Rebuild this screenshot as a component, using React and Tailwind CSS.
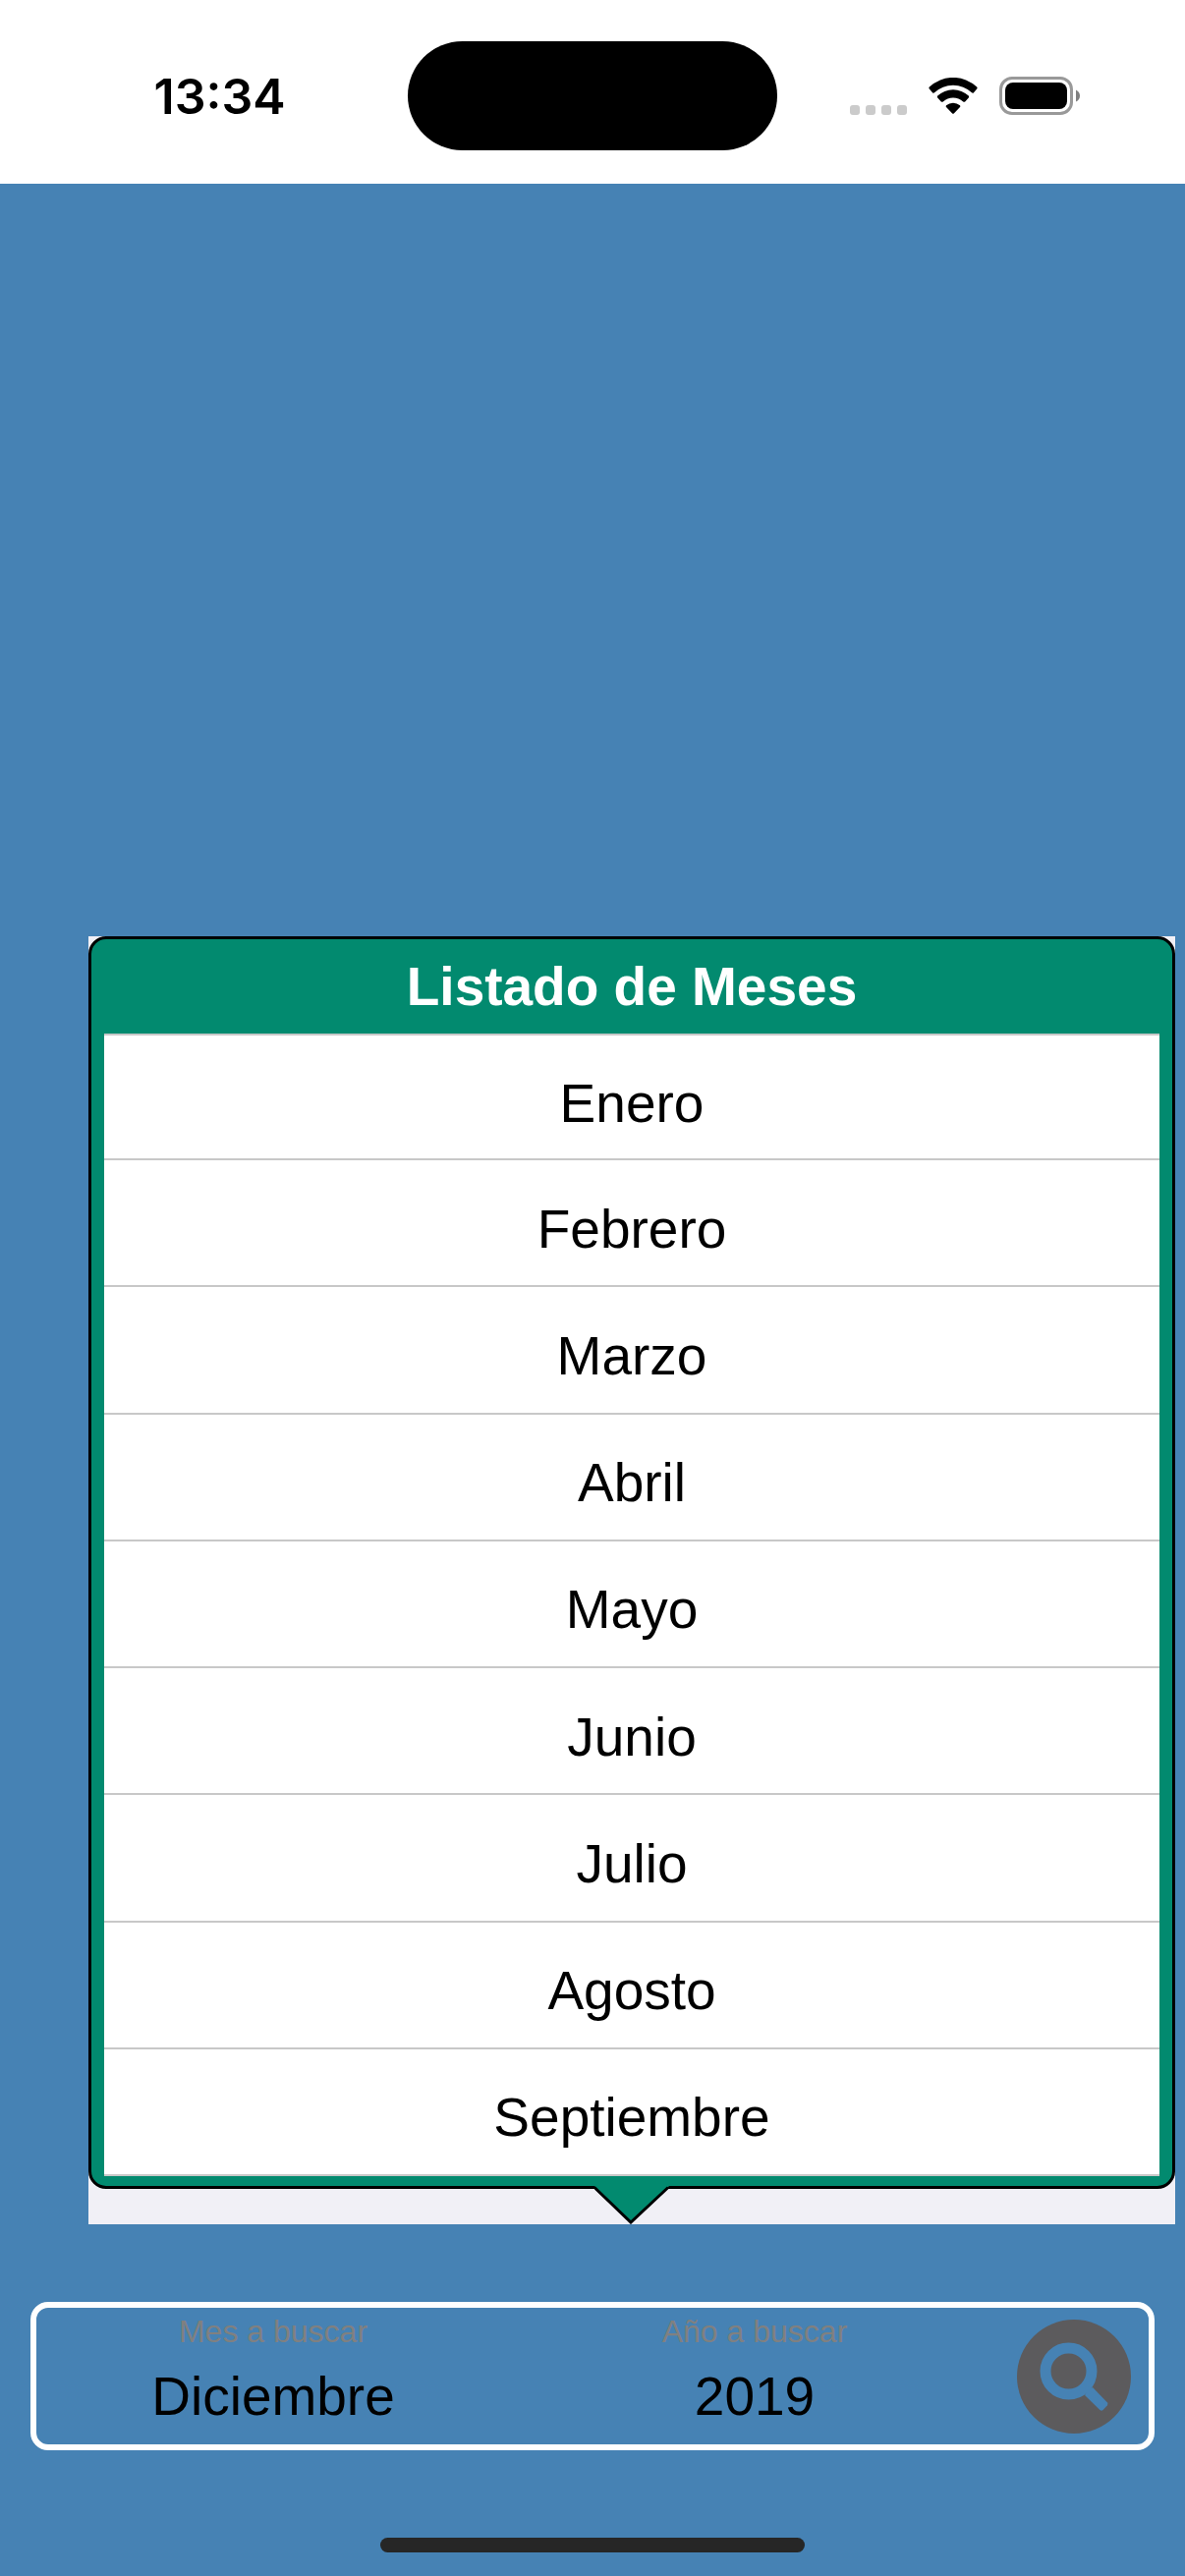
import React, { useState } from "react";

const months = [
  "Enero",
  "Febrero",
  "Marzo",
  "Abril",
  "Mayo",
  "Junio",
  "Julio",
  "Agosto",
  "Septiembre",
];

const StatusBar = () => (
  <header className="bg-white text-black pt-[42px] pb-[34px] flex items-center">
    <div className="flex-1 pl-8 text-center font-['Inter',sans-serif] font-semibold text-[50px] leading-[60px]">
      13:34
    </div>
    <div className="w-[376px] h-[111px] rounded-full bg-black" />
    <div className="flex-1 pr-8 flex items-center justify-center gap-[22px]">
      <svg width="58" height="38" viewBox="0 0 58 38" fill="#cbcbcb" aria-hidden="true">
        <rect x="0" y="28" width="10" height="10" rx="3" />
        <rect x="16" y="28" width="10" height="10" rx="3" />
        <rect x="32" y="28" width="10" height="10" rx="3" />
        <rect x="48" y="28" width="10" height="10" rx="3" />
      </svg>
      <svg width="50" height="38" viewBox="0 0 50 38" fill="#000" aria-hidden="true">
        <path d="M0.8 9.6Q0 10.6 0.8 11.4L4 15.2Q5 16.2 6 15.3A28 28 0 0 1 44 15.3Q45 16.2 46 15.2L49.2 11.4Q50 10.6 49.2 9.6A35 35 0 0 0 0.8 9.6Z" />
        <path d="M9.2 18.6Q8.4 19.6 9.2 20.4L12.8 24.4Q13.8 25.3 14.8 24.4A15.5 15.5 0 0 1 35.2 24.4Q36.2 25.3 37.2 24.4L40.8 20.4Q41.6 19.6 40.8 18.6A23 23 0 0 0 9.2 18.6Z" />
        <path d="M18 28.2Q17.2 29.1 18 30L24.2 36.4Q25 37.3 25.8 36.4L32 30Q32.8 29.1 32 28.2A11 11 0 0 0 18 28.2Z" />
      </svg>
      <svg width="83" height="39" viewBox="0 0 83 39" aria-hidden="true">
        <rect x="1.5" y="1.5" width="72" height="36" rx="11.5" fill="none" stroke="#999" strokeWidth="3" />
        <rect x="6" y="6" width="63" height="27" rx="8" fill="#000" />
        <path d="M78 13.5Q82 15.5 82 19.5T78 25.5Z" fill="#808080" />
      </svg>
    </div>
  </header>
);

const MonthPopup = ({ onSelect }) => (
  <section className="ml-[90px] mr-[10px] bg-[#f1f0f6]">
    <div className="bg-[#028a6f] border-[3px] border-black rounded-[18px] px-[13px] pb-[10px]">
      <h2 className="py-[18px] text-center text-white font-bold text-[55px] leading-[60px]">
        Listado de Meses
      </h2>
      <ul className="bg-white grid auto-rows-fr min-h-[1163px]">
        {months.map((m) => (
          <li key={m} className="border-b-2 first:border-t-2 border-[#c8c8c8]">
            <button
              type="button"
              onClick={() => onSelect(m)}
              className="w-full h-full pt-3 text-center text-[55px] leading-[60px]"
            >
              {m}
            </button>
          </li>
        ))}
      </ul>
    </div>
    <svg className="relative block mx-auto -mt-[3px]" width="76" height="39" viewBox="0 0 76 39" aria-hidden="true">
      <path d="M0 0H76L74 2L37 37L2 2Z" fill="#028a6f" />
      <path d="M0 1.5L37 37L75 1.5" fill="none" stroke="#000" strokeWidth="3" />
    </svg>
  </section>
);

const SearchBar = ({ month }) => (
  <form
    onSubmit={(e) => e.preventDefault()}
    className="mx-[31px] mt-[79px] border-6 border-white rounded-[18px] grid grid-cols-[482fr_498fr_152px]"
  >
    <div className="flex flex-col items-center gap-4 pt-1 pb-[19px]">
      <label htmlFor="mes" className="text-[32px] leading-[40px] text-[#808080]">
        Mes a buscar
      </label>
      <button id="mes" type="button" aria-haspopup="listbox" className="text-[55px] leading-[60px]">
        {month}
      </button>
    </div>
    <div className="flex flex-col items-center gap-4 pt-1 pb-[19px]">
      <label htmlFor="anio" className="text-[32px] leading-[40px] text-[#808080]">
        Año a buscar
      </label>
      <button id="anio" type="button" aria-haspopup="listbox" className="text-[55px] leading-[60px]">
        2019
      </button>
    </div>
    <button type="submit" aria-label="Buscar" className="flex items-center justify-center">
      <svg width="116" height="116" viewBox="0 0 116 116" aria-hidden="true">
        <circle cx="58" cy="58" r="58" fill="#5c5b5d" />
        <circle cx="52.5" cy="52.5" r="23.5" fill="none" stroke="#4682b4" strokeWidth="11" />
        <path
          d="M77 69L91.8 84.2Q93.2 85.8 91.8 87.4L87.6 92Q86 93.4 84.4 92L69 77L72 72Z"
          fill="#4682b4"
        />
      </svg>
    </button>
  </form>
);

const App = () => {
  const [month, setMonth] = useState("Diciembre");

  return (
    <div className="min-h-screen flex flex-col bg-[#4682b4] text-black font-['Liberation_Sans',Arial,sans-serif]">
      <StatusBar />
      <main className="flex-1 flex flex-col justify-end">
        <MonthPopup onSelect={setMonth} />
        <SearchBar month={month} />
      </main>
      <div className="mt-[89px] mb-6 mx-auto w-[432px] h-[15px] rounded-full bg-[#262626]" />
    </div>
  );
};

export default App;
